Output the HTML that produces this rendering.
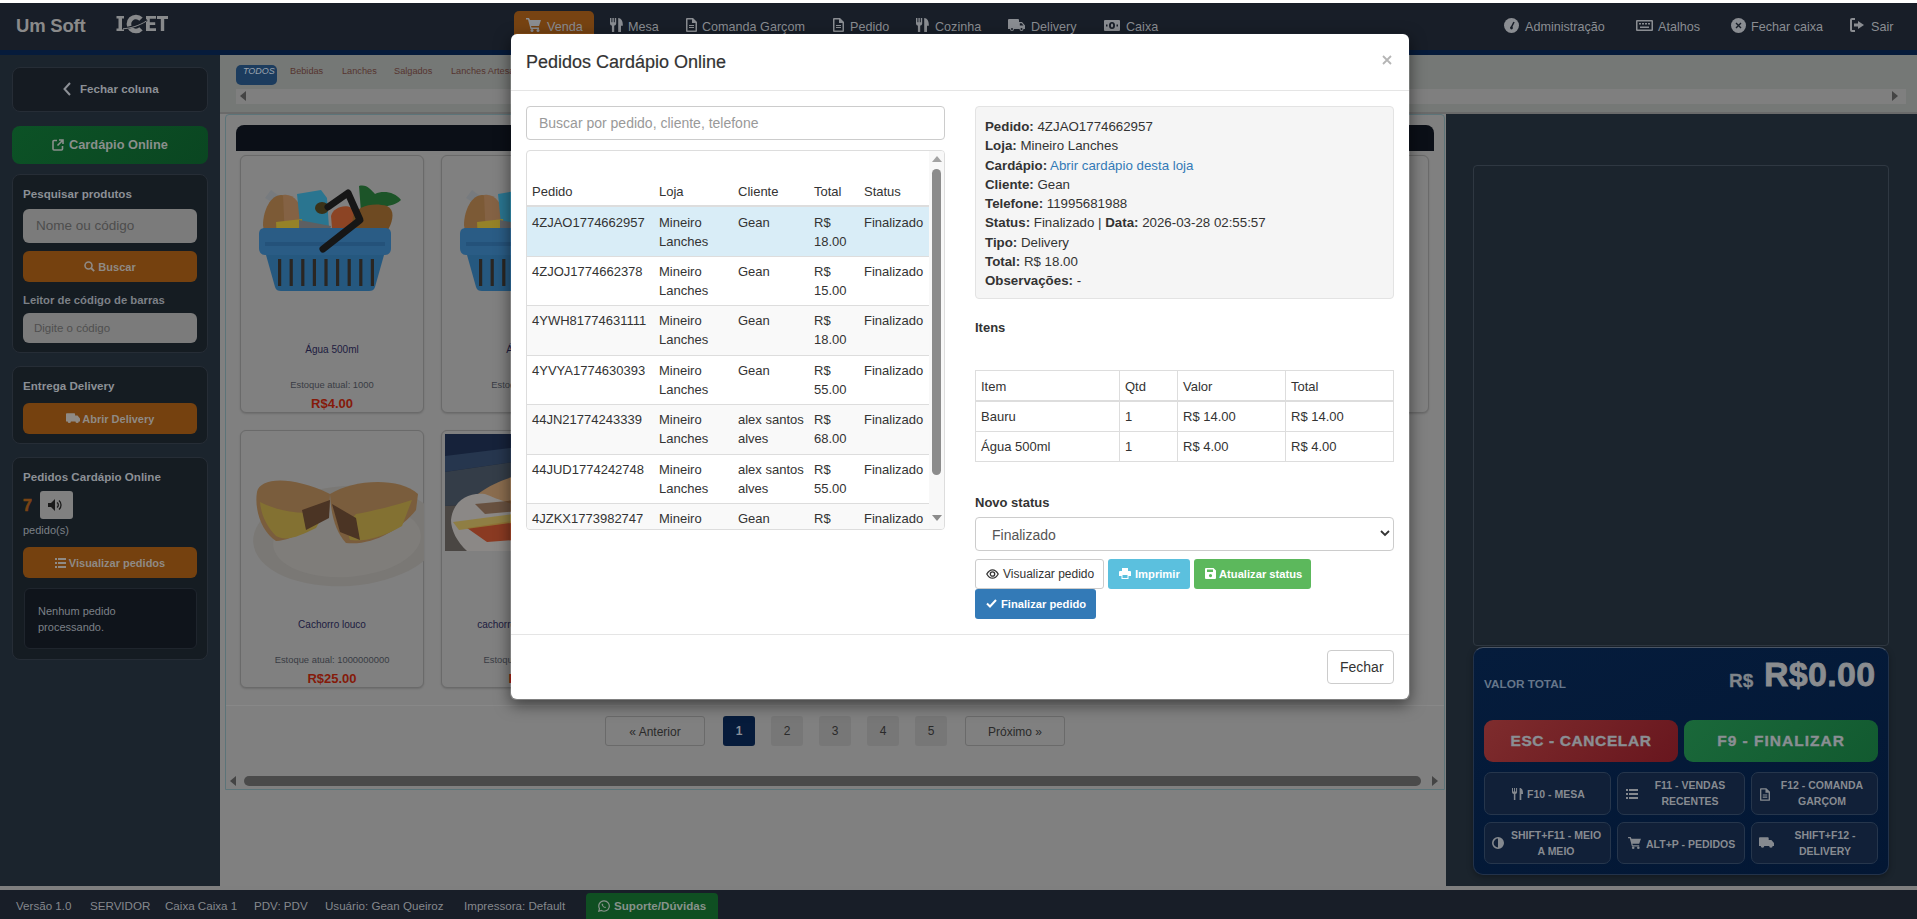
<!DOCTYPE html>
<html><head><meta charset="utf-8">
<style>
*{box-sizing:border-box}
html,body{margin:0;padding:0}
body{width:1917px;height:919px;overflow:hidden;position:relative;font-family:"Liberation Sans",sans-serif;background:#808080}
.a{position:absolute}
.nw{white-space:nowrap}
/* navbar */
#topw{left:0;top:0;width:1917px;height:3px;background:#fff}
#nav{left:0;top:3px;width:1917px;height:47px;background:#181e28}
#navb{left:0;top:50px;width:1917px;height:5px;background:#061b3b}
.ni{top:20px;font-size:12.6px;color:#8a8d92;white-space:nowrap;line-height:15px}
.nic{fill:#8a8d92}
/* sidebar */
#side{left:0;top:55px;width:220px;height:831px;background:#1b242d}
.scard{left:12px;width:196px;background:#151c22;border:1px solid #262d36;border-radius:8px}
.stitle{left:10px;font-size:11.6px;font-weight:bold;color:#8c9096;white-space:nowrap}
.obtn{background:#75410f;border-radius:6px;color:#8f8a85;font-weight:bold;font-size:11px;text-align:center;white-space:nowrap}
.sinp{background:#7b7b7b;border-radius:6px;color:#4a4a4a;white-space:nowrap}
/* main */
#tabs{left:220px;top:55px;width:1697px;height:57px;background:#757876}
#tabline{left:220px;top:112px;width:1697px;height:2px;background:#6a6a6a}
.tab{top:66px;font-size:9.2px;color:#56342f;white-space:nowrap}
#panel{left:225px;top:114px;width:1220px;height:676px;border:1px solid #5c7479;border-radius:4px 4px 0 0;border-bottom-width:1px}
.card{width:184px;height:258px;background:#808080;border:1px solid #6a6a6a;border-radius:6px;box-shadow:0 1px 2px rgba(0,0,0,.15)}
.pname{width:184px;text-align:center;font-size:10px;color:#1d1b3f;white-space:nowrap}
.pst{width:184px;text-align:center;font-size:9.4px;color:#393c44;white-space:nowrap}
.ppr{width:184px;text-align:center;font-size:13px;font-weight:bold;color:#851a0a;white-space:nowrap}
.pg{top:716px;height:30px;border-radius:3px;font-size:12px;color:#2a2a2a;text-align:center;line-height:30px}
/* right */
#rpanel{left:1446px;top:114px;width:471px;height:772px;background:#1b242d}
#gstrip{left:0;top:886px;width:1917px;height:4px;background:#7f7f7f}
#foot{left:0;top:890px;width:1917px;height:29px;background:#181e28}
.ft{top:899px;font-size:11.6px;color:#85888d;white-space:nowrap}
.fk{color:#8a8e93;font-weight:bold;text-align:center;white-space:nowrap}
.sk{background:#112038;border:1px solid #26364c;border-radius:7px}
.skt{font-size:10.5px;font-weight:bold;color:#878b91;line-height:15.5px;white-space:nowrap}
</style></head>
<body>
<div id="topw" class="a"></div>
<div id="nav" class="a"></div>
<div id="navb" class="a"></div>
<div class="a nw" style="left:16px;top:15px;font-size:18.5px;font-weight:bold;color:#8a8a8a;letter-spacing:-0.2px">Um Soft</div>
<svg class="a" style="left:116px;top:14px" width="54" height="20" viewBox="0 0 54 20"><path d="M0.5 2h7.5v2.6H6v9.8h2V17H0.5v-2.6h2V4.6h-2z" fill="#888a8c"/><path d="M25 5.2A7 7 0 1 0 25 14.8" fill="none" stroke="#888a8c" stroke-width="4.6"/><path d="M30 2h10v2.8h-6.2v3.4h5.4V11h-5.4v3.2H40V17H30z" fill="#888a8c"/><path d="M41 2h11v3h-3.8v12h-3.4V5H41z" fill="#888a8c"/><path d="M6 14.5C14 14 22 12 31 6" fill="none" stroke="#181e28" stroke-width="2.2"/><path d="M7 14.8C15 14.2 23 11.8 30.5 7" fill="none" stroke="#888a8c" stroke-width="1"/></svg>
<!-- nav items -->
<div class="a" style="left:514px;top:11px;width:80px;height:39px;background:#774312;border-radius:5px 5px 0 0"></div>
<svg class="a" style="left:526px;top:18px" width="15" height="14" viewBox="0 0 15 14"><path class="nic" d="M0 0h3l1 2h11l-2 6H5l.5 1.5H13V11H4.5L2 1.5H0z"/><circle class="nic" cx="6" cy="12.5" r="1.5"/><circle class="nic" cx="12" cy="12.5" r="1.5"/></svg>
<div class="a ni" style="left:547px">Venda</div>
<svg class="a" style="left:610px;top:18px" width="13" height="14" viewBox="0 0 13 14"><path class="nic" d="M0 0h1.4v4.2h1V0h1.4v4.2h1V0h1.4v5.4c0 1.2-.9 2-2 2.2V14H1.9V7.6C.8 7.4 0 6.6 0 5.4zM8.2 0c3 0 4.6 3 4.6 6.5v1.3h-1.8V14H8.2z"/></svg>
<div class="a ni" style="left:628px">Mesa</div>
<svg class="a" style="left:686px;top:18px" width="11" height="14" viewBox="0 0 11 14"><path class="nic" d="M0 1a1 1 0 011-1h6l4 4v9a1 1 0 01-1 1H1a1 1 0 01-1-1zM1.5 1.5v11h8V5H6V1.5zM3 7h5v1H3zm0 2h5v1H3z"/></svg>
<div class="a ni" style="left:702px">Comanda Garçom</div>
<svg class="a" style="left:833px;top:18px" width="11" height="14" viewBox="0 0 11 14"><path class="nic" d="M0 1a1 1 0 011-1h6l4 4v9a1 1 0 01-1 1H1a1 1 0 01-1-1zM1.5 1.5v11h8V5H6V1.5zM3 7h5v1H3zm0 2h5v1H3z"/></svg>
<div class="a ni" style="left:850px">Pedido</div>
<svg class="a" style="left:916px;top:18px" width="13" height="14" viewBox="0 0 13 14"><path class="nic" d="M0 0h1.4v4.2h1V0h1.4v4.2h1V0h1.4v5.4c0 1.2-.9 2-2 2.2V14H1.9V7.6C.8 7.4 0 6.6 0 5.4zM8.2 0c3 0 4.6 3 4.6 6.5v1.3h-1.8V14H8.2z"/></svg>
<div class="a ni" style="left:935px">Cozinha</div>
<svg class="a" style="left:1008px;top:19px" width="17" height="13" viewBox="0 0 17 13"><path class="nic" d="M0 1a1 1 0 011-1h9a1 1 0 011 1v2h3l3 3.5V10h-1.5a2 2 0 01-4 0H6a2 2 0 01-4 0H0z"/><circle cx="4" cy="10" r="1" fill="#181e28"/><circle cx="13.5" cy="10" r="1" fill="#181e28"/><path d="M11.8 4.2h1.8l1.9 2.3h-3.7z" fill="#181e28"/></svg>
<div class="a ni" style="left:1031px">Delivery</div>
<svg class="a" style="left:1104px;top:20px" width="16" height="11" viewBox="0 0 16 11"><rect class="nic" x="0" y="0" width="16" height="11" rx="1"/><ellipse cx="8" cy="5.5" rx="3" ry="3.6" fill="#181e28"/><ellipse cx="8" cy="5.5" rx="1.1" ry="2" fill="#8a8d92"/><rect x="2" y="4.5" width="1.5" height="2" fill="#181e28"/><rect x="12.5" y="4.5" width="1.5" height="2" fill="#181e28"/></svg>
<div class="a ni" style="left:1126px">Caixa</div>
<svg class="a" style="left:1504px;top:18px" width="15" height="15" viewBox="0 0 15 15"><circle class="nic" cx="7.5" cy="7.5" r="7.5"/><path d="M7 10l3-6" stroke="#181e28" stroke-width="1.6"/><circle cx="7.5" cy="10" r="1.4" fill="#181e28"/></svg>
<div class="a ni" style="left:1525px">Administração</div>
<svg class="a" style="left:1636px;top:20px" width="17" height="11" viewBox="0 0 17 11"><path class="nic" d="M0 1a1 1 0 011-1h15a1 1 0 011 1v9a1 1 0 01-1 1H1a1 1 0 01-1-1zM1.5 1.5v8h14v-8zM3 3h2v1.5H3zm3 0h2v1.5H6zm3 0h2v1.5H9zm3 0h2v1.5h-2zM4 6.5h9V8H4z"/></svg>
<div class="a ni" style="left:1658px">Atalhos</div>
<svg class="a" style="left:1731px;top:18px" width="15" height="15" viewBox="0 0 15 15"><circle class="nic" cx="7.5" cy="7.5" r="7.5"/><path d="M5 5l5 5M10 5l-5 5" stroke="#181e28" stroke-width="1.4"/></svg>
<div class="a ni" style="left:1751px">Fechar caixa</div>
<svg class="a" style="left:1850px;top:18px" width="15" height="14" viewBox="0 0 15 14"><path class="nic" d="M0 2a2 2 0 012-2h3v2H2v10h3v2H2a2 2 0 01-2-2zM8 3l6 4-6 4V8.5H4v-3h4z"/></svg>
<div class="a ni" style="left:1871px">Sair</div>

<!-- sidebar -->
<div id="side" class="a"></div>
<div class="a scard" style="top:67px;height:45px;background:#151b22"></div>
<svg class="a" style="left:63px;top:82px" width="8" height="14" viewBox="0 0 8 14"><path d="M7 1L1.5 7 7 13" fill="none" stroke="#8c9096" stroke-width="2"/></svg>
<div class="a nw" style="left:80px;top:82px;font-size:11.6px;font-weight:bold;color:#8c9096">Fechar coluna</div>
<div class="a" style="left:12px;top:126px;width:196px;height:38px;background:linear-gradient(135deg,#0c5226,#0a4621);border-radius:8px"></div>
<svg class="a" style="left:52px;top:139px" width="12" height="12" viewBox="0 0 12 12"><path d="M5 1.5H2a1 1 0 00-1 1v7.5a1 1 0 001 1h7.5a1 1 0 001-1V7" fill="none" stroke="#8a8f8c" stroke-width="1.6"/><path d="M7 1h4v4M11 1L5.5 6.5" fill="none" stroke="#8a8f8c" stroke-width="1.6"/></svg>
<div class="a nw" style="left:69px;top:137px;font-size:12.8px;font-weight:bold;color:#8a8f8c">Cardápio Online</div>

<div class="a scard" style="top:174px;height:179px"></div>
<div class="a stitle" style="left:23px;top:187px">Pesquisar produtos</div>
<div class="a sinp" style="left:23px;top:209px;width:174px;height:34px;font-size:13.5px;padding:9px 0 0 13px;color:#4d4d4d">Nome ou código</div>
<div class="a obtn" style="left:23px;top:251px;width:174px;height:31px;line-height:33px">
<svg width="11" height="11" viewBox="0 0 11 11" style="vertical-align:-1px"><circle cx="4.5" cy="4.5" r="3.5" fill="none" stroke="#8f8a85" stroke-width="1.6"/><path d="M7 7l3.2 3.2" stroke="#8f8a85" stroke-width="1.8"/></svg> Buscar</div>
<div class="a stitle" style="left:23px;top:294px;font-size:11.3px;color:#7c8087">Leitor de código de barras</div>
<div class="a sinp" style="left:23px;top:313px;width:174px;height:30px;font-size:11.5px;padding:9px 0 0 11px;color:#4f4f4f">Digite o código</div>

<div class="a scard" style="top:366px;height:78px"></div>
<div class="a stitle" style="left:23px;top:379px">Entrega Delivery</div>
<div class="a obtn" style="left:23px;top:403px;width:174px;height:31px;line-height:33px">
<svg width="14" height="11" viewBox="0 0 17 13" style="vertical-align:-1px"><path fill="#8f8a85" d="M0 1a1 1 0 011-1h9a1 1 0 011 1v2h3l3 3.5V10h-1.5a2 2 0 01-4 0H6a2 2 0 01-4 0H0z"/></svg> Abrir Delivery</div>

<div class="a scard" style="top:457px;height:203px"></div>
<div class="a stitle" style="left:23px;top:470px">Pedidos Cardápio Online</div>
<div class="a nw" style="left:23px;top:497px;font-size:16px;font-weight:bold;color:#7a4414;-webkit-text-stroke:0.6px #7a4414">7</div>
<div class="a" style="left:40px;top:491px;width:33px;height:28px;background:#808080;border-radius:3px"></div>
<svg class="a" style="left:48px;top:499px" width="16" height="12" viewBox="0 0 16 12"><path d="M0 4h3l4-4v12L3 8H0z" fill="#1a1a1a"/><path d="M9 3.5a3 3 0 010 5M11 1.5a6 6 0 010 9" fill="none" stroke="#1a1a1a" stroke-width="1.3"/></svg>
<div class="a nw" style="left:23px;top:524px;font-size:11px;color:#7c8087">pedido(s)</div>
<div class="a obtn" style="left:23px;top:547px;width:174px;height:31px;line-height:33px">
<svg width="11" height="10" viewBox="0 0 11 10" style="vertical-align:-1px"><path fill="#8f8a85" d="M0 0h2v2H0zm3 0h8v2H3zM0 4h2v2H0zm3 0h8v2H3zM0 8h2v2H0zm3 0h8v2H3z"/></svg> Visualizar pedidos</div>
<div class="a" style="left:24px;top:588px;width:173px;height:61px;background:#0f141b;border:1px solid #1f252d;border-radius:6px"></div>
<div class="a" style="left:38px;top:603px;font-size:11px;line-height:16px;color:#7c8087">Nenhum pedido<br>processando.</div>

<!-- main -->
<div id="tabs" class="a"></div>
<div class="a" style="left:236px;top:65px;width:41px;height:20px;background:#1c3c5e;border-radius:5px"></div>
<div class="a nw" style="left:243px;top:66px;font-size:9px;font-style:italic;color:#9aa3ad">TODOS</div>
<div class="a tab" style="left:290px">Bebidas</div>
<div class="a tab" style="left:342px">Lanches</div>
<div class="a tab" style="left:394px">Salgados</div>
<div class="a tab" style="left:451px">Lanches Artesanais</div>
<div class="a" style="left:236px;top:89px;width:1670px;height:15px;background:#7f7f7f"></div>
<svg class="a" style="left:240px;top:91px" width="6" height="10" viewBox="0 0 6 10"><path d="M6 0v10L0 5z" fill="#444"/></svg>
<svg class="a" style="left:1892px;top:91px" width="6" height="10" viewBox="0 0 6 10"><path d="M0 0v10l6-5z" fill="#444"/></svg>
<div id="tabline" class="a"></div>
<div id="panel" class="a"></div>
<div class="a" style="left:236px;top:125px;width:1198px;height:26px;background:#0b0f17;border-radius:8px 8px 0 0"></div>

<div id="cards"><div class="a card" style="left:240px;top:155px"></div>
<svg class="a" style="left:255px;top:180px" width="150" height="115" viewBox="0 0 150 115"><path d="M10 18l6-8 8 6-4 8z" fill="#777b7f"/><path d="M8 45c0-15 8-30 18-30 8 0 14 6 16 14l-2 30H10z" fill="#7c5a36"/><path d="M28 15c10-2 18 8 20 20l-5 25H30z" fill="#846244"/><path d="M42 14l24-4 6 8 2 30-28 6z" fill="#2a7590"/><path d="M60 28a7 6 0 1014 0 7 6 0 10-14 0z" fill="#3a3218"/><path d="M76 36c2-10 20-14 24-4l-2 28H78z" fill="#8c4424"/><path d="M104 6c8-2 12 4 16 8 8-4 20-2 26 6-6 6-16 6-24 8l-16 4z" fill="#1c5428"/><path d="M98 36c4-10 20-14 34-10 8 4 6 14 2 22l-10 16H96z" fill="#6e4a22"/><path d="M21 42l26-3 3 22H22z" fill="#958228"/><path d="M44 40l32 6-4 16-28-4z" fill="#5d5f62"/><path d="M4 54c0-4 2-6 6-6h120c4 0 6 2 6 6v14c0 4-2 7-6 7H10c-4 0-6-3-6-7z" fill="#2a5c85"/><path d="M10 62h120v4H10z" fill="#24527a"/><path d="M11 75h118l-9 32c-1 3-3 4-6 4H26c-3 0-5-1-6-4z" fill="#25587f"/><path d="M23.0 79h3.2v27h-3.2zM34.6 79h3.2v27h-3.2zM46.2 79h3.2v27h-3.2zM57.8 79h3.2v27h-3.2zM69.4 79h3.2v27h-3.2zM81.0 79h3.2v27h-3.2zM92.6 79h3.2v27h-3.2zM104.2 79h3.2v27h-3.2zM115.8 79h3.2v27h-3.2z" fill="#2a2622"/><path d="M73 27L93 13 105 40 68 69" fill="none" stroke="#161616" stroke-width="7" stroke-linejoin="round" stroke-linecap="round"/></svg>
<div class="a pname" style="left:240px;top:344px">Água 500ml</div>
<div class="a pst" style="left:240px;top:379px">Estoque atual: 1000</div>
<div class="a ppr" style="left:240px;top:396px">R$4.00</div>
<div class="a card" style="left:441px;top:155px"></div>
<svg class="a" style="left:456px;top:180px" width="150" height="115" viewBox="0 0 150 115"><path d="M10 18l6-8 8 6-4 8z" fill="#777b7f"/><path d="M8 45c0-15 8-30 18-30 8 0 14 6 16 14l-2 30H10z" fill="#7c5a36"/><path d="M28 15c10-2 18 8 20 20l-5 25H30z" fill="#846244"/><path d="M42 14l24-4 6 8 2 30-28 6z" fill="#2a7590"/><path d="M60 28a7 6 0 1014 0 7 6 0 10-14 0z" fill="#3a3218"/><path d="M76 36c2-10 20-14 24-4l-2 28H78z" fill="#8c4424"/><path d="M104 6c8-2 12 4 16 8 8-4 20-2 26 6-6 6-16 6-24 8l-16 4z" fill="#1c5428"/><path d="M98 36c4-10 20-14 34-10 8 4 6 14 2 22l-10 16H96z" fill="#6e4a22"/><path d="M21 42l26-3 3 22H22z" fill="#958228"/><path d="M44 40l32 6-4 16-28-4z" fill="#5d5f62"/><path d="M4 54c0-4 2-6 6-6h120c4 0 6 2 6 6v14c0 4-2 7-6 7H10c-4 0-6-3-6-7z" fill="#2a5c85"/><path d="M10 62h120v4H10z" fill="#24527a"/><path d="M11 75h118l-9 32c-1 3-3 4-6 4H26c-3 0-5-1-6-4z" fill="#25587f"/><path d="M23.0 79h3.2v27h-3.2zM34.6 79h3.2v27h-3.2zM46.2 79h3.2v27h-3.2zM57.8 79h3.2v27h-3.2zM69.4 79h3.2v27h-3.2zM81.0 79h3.2v27h-3.2zM92.6 79h3.2v27h-3.2zM104.2 79h3.2v27h-3.2zM115.8 79h3.2v27h-3.2z" fill="#2a2622"/><path d="M73 27L93 13 105 40 68 69" fill="none" stroke="#161616" stroke-width="7" stroke-linejoin="round" stroke-linecap="round"/></svg>
<div class="a pname" style="left:441px;top:344px">Água 500ml</div>
<div class="a pst" style="left:441px;top:379px">Estoque atual: 1000</div>
<div class="a ppr" style="left:441px;top:396px">R$4.00</div>
<div class="a card" style="left:642px;top:155px"></div>
<svg class="a" style="left:657px;top:180px" width="150" height="115" viewBox="0 0 150 115"><path d="M10 18l6-8 8 6-4 8z" fill="#777b7f"/><path d="M8 45c0-15 8-30 18-30 8 0 14 6 16 14l-2 30H10z" fill="#7c5a36"/><path d="M28 15c10-2 18 8 20 20l-5 25H30z" fill="#846244"/><path d="M42 14l24-4 6 8 2 30-28 6z" fill="#2a7590"/><path d="M60 28a7 6 0 1014 0 7 6 0 10-14 0z" fill="#3a3218"/><path d="M76 36c2-10 20-14 24-4l-2 28H78z" fill="#8c4424"/><path d="M104 6c8-2 12 4 16 8 8-4 20-2 26 6-6 6-16 6-24 8l-16 4z" fill="#1c5428"/><path d="M98 36c4-10 20-14 34-10 8 4 6 14 2 22l-10 16H96z" fill="#6e4a22"/><path d="M21 42l26-3 3 22H22z" fill="#958228"/><path d="M44 40l32 6-4 16-28-4z" fill="#5d5f62"/><path d="M4 54c0-4 2-6 6-6h120c4 0 6 2 6 6v14c0 4-2 7-6 7H10c-4 0-6-3-6-7z" fill="#2a5c85"/><path d="M10 62h120v4H10z" fill="#24527a"/><path d="M11 75h118l-9 32c-1 3-3 4-6 4H26c-3 0-5-1-6-4z" fill="#25587f"/><path d="M23.0 79h3.2v27h-3.2zM34.6 79h3.2v27h-3.2zM46.2 79h3.2v27h-3.2zM57.8 79h3.2v27h-3.2zM69.4 79h3.2v27h-3.2zM81.0 79h3.2v27h-3.2zM92.6 79h3.2v27h-3.2zM104.2 79h3.2v27h-3.2zM115.8 79h3.2v27h-3.2z" fill="#2a2622"/><path d="M73 27L93 13 105 40 68 69" fill="none" stroke="#161616" stroke-width="7" stroke-linejoin="round" stroke-linecap="round"/></svg>
<div class="a pname" style="left:642px;top:344px">Refrigerante</div>
<div class="a pst" style="left:642px;top:379px">Estoque atual: 1000</div>
<div class="a ppr" style="left:642px;top:396px">R$6.00</div>
<div class="a card" style="left:843px;top:155px"></div>
<svg class="a" style="left:858px;top:180px" width="150" height="115" viewBox="0 0 150 115"><path d="M10 18l6-8 8 6-4 8z" fill="#777b7f"/><path d="M8 45c0-15 8-30 18-30 8 0 14 6 16 14l-2 30H10z" fill="#7c5a36"/><path d="M28 15c10-2 18 8 20 20l-5 25H30z" fill="#846244"/><path d="M42 14l24-4 6 8 2 30-28 6z" fill="#2a7590"/><path d="M60 28a7 6 0 1014 0 7 6 0 10-14 0z" fill="#3a3218"/><path d="M76 36c2-10 20-14 24-4l-2 28H78z" fill="#8c4424"/><path d="M104 6c8-2 12 4 16 8 8-4 20-2 26 6-6 6-16 6-24 8l-16 4z" fill="#1c5428"/><path d="M98 36c4-10 20-14 34-10 8 4 6 14 2 22l-10 16H96z" fill="#6e4a22"/><path d="M21 42l26-3 3 22H22z" fill="#958228"/><path d="M44 40l32 6-4 16-28-4z" fill="#5d5f62"/><path d="M4 54c0-4 2-6 6-6h120c4 0 6 2 6 6v14c0 4-2 7-6 7H10c-4 0-6-3-6-7z" fill="#2a5c85"/><path d="M10 62h120v4H10z" fill="#24527a"/><path d="M11 75h118l-9 32c-1 3-3 4-6 4H26c-3 0-5-1-6-4z" fill="#25587f"/><path d="M23.0 79h3.2v27h-3.2zM34.6 79h3.2v27h-3.2zM46.2 79h3.2v27h-3.2zM57.8 79h3.2v27h-3.2zM69.4 79h3.2v27h-3.2zM81.0 79h3.2v27h-3.2zM92.6 79h3.2v27h-3.2zM104.2 79h3.2v27h-3.2zM115.8 79h3.2v27h-3.2z" fill="#2a2622"/><path d="M73 27L93 13 105 40 68 69" fill="none" stroke="#161616" stroke-width="7" stroke-linejoin="round" stroke-linecap="round"/></svg>
<div class="a pname" style="left:843px;top:344px">Suco</div>
<div class="a pst" style="left:843px;top:379px">Estoque atual: 1000</div>
<div class="a ppr" style="left:843px;top:396px">R$5.00</div>
<div class="a card" style="left:1044px;top:155px"></div>
<svg class="a" style="left:1059px;top:180px" width="150" height="115" viewBox="0 0 150 115"><path d="M10 18l6-8 8 6-4 8z" fill="#777b7f"/><path d="M8 45c0-15 8-30 18-30 8 0 14 6 16 14l-2 30H10z" fill="#7c5a36"/><path d="M28 15c10-2 18 8 20 20l-5 25H30z" fill="#846244"/><path d="M42 14l24-4 6 8 2 30-28 6z" fill="#2a7590"/><path d="M60 28a7 6 0 1014 0 7 6 0 10-14 0z" fill="#3a3218"/><path d="M76 36c2-10 20-14 24-4l-2 28H78z" fill="#8c4424"/><path d="M104 6c8-2 12 4 16 8 8-4 20-2 26 6-6 6-16 6-24 8l-16 4z" fill="#1c5428"/><path d="M98 36c4-10 20-14 34-10 8 4 6 14 2 22l-10 16H96z" fill="#6e4a22"/><path d="M21 42l26-3 3 22H22z" fill="#958228"/><path d="M44 40l32 6-4 16-28-4z" fill="#5d5f62"/><path d="M4 54c0-4 2-6 6-6h120c4 0 6 2 6 6v14c0 4-2 7-6 7H10c-4 0-6-3-6-7z" fill="#2a5c85"/><path d="M10 62h120v4H10z" fill="#24527a"/><path d="M11 75h118l-9 32c-1 3-3 4-6 4H26c-3 0-5-1-6-4z" fill="#25587f"/><path d="M23.0 79h3.2v27h-3.2zM34.6 79h3.2v27h-3.2zM46.2 79h3.2v27h-3.2zM57.8 79h3.2v27h-3.2zM69.4 79h3.2v27h-3.2zM81.0 79h3.2v27h-3.2zM92.6 79h3.2v27h-3.2zM104.2 79h3.2v27h-3.2zM115.8 79h3.2v27h-3.2z" fill="#2a2622"/><path d="M73 27L93 13 105 40 68 69" fill="none" stroke="#161616" stroke-width="7" stroke-linejoin="round" stroke-linecap="round"/></svg>
<div class="a pname" style="left:1044px;top:344px">Coxinha</div>
<div class="a pst" style="left:1044px;top:379px">Estoque atual: 1000</div>
<div class="a ppr" style="left:1044px;top:396px">R$7.00</div>
<div class="a card" style="left:1245px;top:155px"></div>
<svg class="a" style="left:1260px;top:180px" width="150" height="115" viewBox="0 0 150 115"><path d="M10 18l6-8 8 6-4 8z" fill="#777b7f"/><path d="M8 45c0-15 8-30 18-30 8 0 14 6 16 14l-2 30H10z" fill="#7c5a36"/><path d="M28 15c10-2 18 8 20 20l-5 25H30z" fill="#846244"/><path d="M42 14l24-4 6 8 2 30-28 6z" fill="#2a7590"/><path d="M60 28a7 6 0 1014 0 7 6 0 10-14 0z" fill="#3a3218"/><path d="M76 36c2-10 20-14 24-4l-2 28H78z" fill="#8c4424"/><path d="M104 6c8-2 12 4 16 8 8-4 20-2 26 6-6 6-16 6-24 8l-16 4z" fill="#1c5428"/><path d="M98 36c4-10 20-14 34-10 8 4 6 14 2 22l-10 16H96z" fill="#6e4a22"/><path d="M21 42l26-3 3 22H22z" fill="#958228"/><path d="M44 40l32 6-4 16-28-4z" fill="#5d5f62"/><path d="M4 54c0-4 2-6 6-6h120c4 0 6 2 6 6v14c0 4-2 7-6 7H10c-4 0-6-3-6-7z" fill="#2a5c85"/><path d="M10 62h120v4H10z" fill="#24527a"/><path d="M11 75h118l-9 32c-1 3-3 4-6 4H26c-3 0-5-1-6-4z" fill="#25587f"/><path d="M23.0 79h3.2v27h-3.2zM34.6 79h3.2v27h-3.2zM46.2 79h3.2v27h-3.2zM57.8 79h3.2v27h-3.2zM69.4 79h3.2v27h-3.2zM81.0 79h3.2v27h-3.2zM92.6 79h3.2v27h-3.2zM104.2 79h3.2v27h-3.2zM115.8 79h3.2v27h-3.2z" fill="#2a2622"/><path d="M73 27L93 13 105 40 68 69" fill="none" stroke="#161616" stroke-width="7" stroke-linejoin="round" stroke-linecap="round"/></svg>
<div class="a pname" style="left:1245px;top:344px">Pastel</div>
<div class="a pst" style="left:1245px;top:379px">Estoque atual: 1000</div>
<div class="a ppr" style="left:1245px;top:396px">R$8.00</div>
<div class="a card" style="left:240px;top:430px"></div>
<svg class="a" style="left:250px;top:470px" width="174" height="130" viewBox="0 0 174 130"><ellipse cx="97" cy="66" rx="94" ry="50" fill="#7a7875" transform="rotate(-4 97 66)"/><ellipse cx="97" cy="70" rx="74" ry="37" fill="#7f7d7a" transform="rotate(-4 97 70)"/><path d="M7 22C10 8 40 5 80 24L79 44C62 56 45 70 26 71 12 62 4 40 7 22z" fill="#7a5d3d"/><path d="M10 32C30 42 55 46 76 40L66 58C50 66 36 72 26 66 16 56 11 44 10 32z" fill="#837132"/><path d="M52 40L80 30 79 48 56 60z" fill="#4b3424"/><path d="M80 24C102 10 148 6 168 24L166 40C150 60 122 76 96 73 86 62 81 46 80 24z" fill="#7a5d3d"/><path d="M106 44C128 40 150 34 162 30L152 56C132 68 112 72 100 70 96 62 100 50 106 44z" fill="#837132"/><path d="M82 34L106 48 110 70 90 62z" fill="#4b3424"/></svg>
<div class="a pname" style="left:240px;top:619px">Cachorro louco</div>
<div class="a pst" style="left:240px;top:654px">Estoque atual: 1000000000</div>
<div class="a ppr" style="left:240px;top:671px">R$25.00</div>
<div class="a card" style="left:441px;top:430px"></div>
<svg class="a" style="left:445px;top:434px" width="177" height="117" viewBox="0 0 177 117"><rect width="177" height="117" fill="#16223a"/><path d="M0 22L177 0v12L0 38z" fill="#26364e"/><path d="M0 38L177 12v50L0 72z" fill="#343d48"/><path d="M0 72L177 62v55H0z" fill="#4a4643"/><path d="M18 80C24 58 62 38 112 35h65v50H18z" fill="#8a6c4e"/><path d="M6 86C8 66 24 58 40 60 60 68 90 82 177 86v31H22C12 108 6 96 6 86z" fill="#8b8886"/><path d="M22 94L177 70v28L42 108z" fill="#8a3a22"/><path d="M8 88L177 66v8L14 96z" fill="#8f7c38" opacity=".85"/><path d="M30 70L177 56v12L40 80z" fill="#5a3a22" opacity=".7"/></svg>
<div class="a pname" style="left:441px;top:619px">cachorro quente especial</div>
<div class="a pst" style="left:441px;top:654px">Estoque atual: 1000000</div>
<div class="a ppr" style="left:441px;top:671px">R$15.00</div>
<div class="a card" style="left:642px;top:430px"></div>
<svg class="a" style="left:652px;top:470px" width="174" height="130" viewBox="0 0 174 130"><ellipse cx="97" cy="66" rx="94" ry="50" fill="#7a7875" transform="rotate(-4 97 66)"/><ellipse cx="97" cy="70" rx="74" ry="37" fill="#7f7d7a" transform="rotate(-4 97 70)"/><path d="M7 22C10 8 40 5 80 24L79 44C62 56 45 70 26 71 12 62 4 40 7 22z" fill="#7a5d3d"/><path d="M10 32C30 42 55 46 76 40L66 58C50 66 36 72 26 66 16 56 11 44 10 32z" fill="#837132"/><path d="M52 40L80 30 79 48 56 60z" fill="#4b3424"/><path d="M80 24C102 10 148 6 168 24L166 40C150 60 122 76 96 73 86 62 81 46 80 24z" fill="#7a5d3d"/><path d="M106 44C128 40 150 34 162 30L152 56C132 68 112 72 100 70 96 62 100 50 106 44z" fill="#837132"/><path d="M82 34L106 48 110 70 90 62z" fill="#4b3424"/></svg>
<div class="a pname" style="left:642px;top:619px">X-Burger</div>
<div class="a pst" style="left:642px;top:654px">Estoque atual: 1000</div>
<div class="a ppr" style="left:642px;top:671px">R$18.00</div>
<div class="a card" style="left:843px;top:430px"></div>
<svg class="a" style="left:853px;top:470px" width="174" height="130" viewBox="0 0 174 130"><ellipse cx="97" cy="66" rx="94" ry="50" fill="#7a7875" transform="rotate(-4 97 66)"/><ellipse cx="97" cy="70" rx="74" ry="37" fill="#7f7d7a" transform="rotate(-4 97 70)"/><path d="M7 22C10 8 40 5 80 24L79 44C62 56 45 70 26 71 12 62 4 40 7 22z" fill="#7a5d3d"/><path d="M10 32C30 42 55 46 76 40L66 58C50 66 36 72 26 66 16 56 11 44 10 32z" fill="#837132"/><path d="M52 40L80 30 79 48 56 60z" fill="#4b3424"/><path d="M80 24C102 10 148 6 168 24L166 40C150 60 122 76 96 73 86 62 81 46 80 24z" fill="#7a5d3d"/><path d="M106 44C128 40 150 34 162 30L152 56C132 68 112 72 100 70 96 62 100 50 106 44z" fill="#837132"/><path d="M82 34L106 48 110 70 90 62z" fill="#4b3424"/></svg>
<div class="a pname" style="left:843px;top:619px">X-Salada</div>
<div class="a pst" style="left:843px;top:654px">Estoque atual: 1000</div>
<div class="a ppr" style="left:843px;top:671px">R$20.00</div>
<div class="a card" style="left:1044px;top:430px"></div>
<svg class="a" style="left:1048px;top:434px" width="177" height="117" viewBox="0 0 177 117"><rect width="177" height="117" fill="#16223a"/><path d="M0 22L177 0v12L0 38z" fill="#26364e"/><path d="M0 38L177 12v50L0 72z" fill="#343d48"/><path d="M0 72L177 62v55H0z" fill="#4a4643"/><path d="M18 80C24 58 62 38 112 35h65v50H18z" fill="#8a6c4e"/><path d="M6 86C8 66 24 58 40 60 60 68 90 82 177 86v31H22C12 108 6 96 6 86z" fill="#8b8886"/><path d="M22 94L177 70v28L42 108z" fill="#8a3a22"/><path d="M8 88L177 66v8L14 96z" fill="#8f7c38" opacity=".85"/><path d="M30 70L177 56v12L40 80z" fill="#5a3a22" opacity=".7"/></svg>
<div class="a pname" style="left:1044px;top:619px">Bauru</div>
<div class="a pst" style="left:1044px;top:654px">Estoque atual: 1000</div>
<div class="a ppr" style="left:1044px;top:671px">R$14.00</div></div><!--/cards-->

<div class="a" style="left:226px;top:705px;width:1218px;height:1px;background:#888"></div>
<div class="a pg" style="left:605px;width:100px;border:1px solid #6a6a6a">« Anterior</div>
<div class="a pg" style="left:723px;width:32px;background:#061b3b;color:#8a8f98;font-weight:bold;line-height:31px">1</div>
<div class="a pg" style="left:771px;width:32px;background:#777">2</div>
<div class="a pg" style="left:819px;width:32px;background:#777">3</div>
<div class="a pg" style="left:867px;width:32px;background:#777">4</div>
<div class="a pg" style="left:915px;width:32px;background:#777">5</div>
<div class="a pg" style="left:965px;width:100px;border:1px solid #6a6a6a">Próximo »</div>
<svg class="a" style="left:230px;top:776px" width="6" height="10" viewBox="0 0 6 10"><path d="M6 0v10L0 5z" fill="#444"/></svg>
<div class="a" style="left:244px;top:776px;width:1177px;height:10px;background:#4a4a4a;border-radius:5px"></div>
<svg class="a" style="left:1432px;top:776px" width="6" height="10" viewBox="0 0 6 10"><path d="M0 0v10l6-5z" fill="#444"/></svg>

<!-- right panel -->
<div id="rpanel" class="a"></div>
<div class="a" style="left:1473px;top:165px;width:416px;height:481px;border:1px solid #2f3842;border-radius:4px"></div>
<div class="a" style="left:1473px;top:647px;width:416px;height:228px;background:linear-gradient(160deg,#051c3c,#031734);border:1px solid #22324a;border-top-color:#4a5565;border-radius:10px;box-shadow:0 2px 6px rgba(0,0,0,.3)"></div>
<div class="a nw" style="left:1484px;top:677px;font-size:11.8px;font-weight:bold;color:#66768a">VALOR TOTAL</div>
<div class="a nw" style="left:1729px;top:670px;font-size:19px;font-weight:bold;color:#7f8489;-webkit-text-stroke:0.3px #7f8489">R$</div>
<div class="a nw" style="left:1764px;top:655px;font-size:34px;font-weight:bold;color:#8a8c8f;letter-spacing:0.3px;-webkit-text-stroke:0.8px #8a8c8f">R$0.00</div>
<div class="a fk" style="left:1484px;top:720px;width:194px;height:42px;line-height:42px;background:linear-gradient(135deg,#7e2c2d,#68161e);border-radius:9px;font-size:15.5px;letter-spacing:0.6px;-webkit-text-stroke:0.4px #8a8e93">ESC - CANCELAR</div>
<div class="a fk" style="left:1684px;top:720px;width:194px;height:42px;line-height:42px;background:linear-gradient(135deg,#1a683a,#125a30);border-radius:9px;font-size:15.5px;letter-spacing:1px;-webkit-text-stroke:0.4px #8a8e93">F9 - FINALIZAR</div>
<div class="a sk" style="left:1484px;top:772px;width:127px;height:43px"></div>
<div class="a sk" style="left:1617px;top:772px;width:128px;height:43px"></div>
<div class="a sk" style="left:1751px;top:772px;width:127px;height:43px"></div>
<div class="a sk" style="left:1484px;top:822px;width:127px;height:42px"></div>
<div class="a sk" style="left:1617px;top:822px;width:128px;height:42px"></div>
<div class="a sk" style="left:1751px;top:822px;width:127px;height:42px"></div>
<svg class="a" style="left:1512px;top:788px" width="11" height="12" viewBox="0 0 13 14"><path fill="#85898f" d="M0 0h1.2v4h1.2V0h1.2v4h1.2V0H6v5c0 1-1 2-2 2v7H2.2V7C1 7 0 6 0 5zM9 0c3 0 4 3 4 6v1h-2v7H9z"/></svg>
<div class="a skt" style="left:1527px;top:787px">F10 - MESA</div>
<svg class="a" style="left:1626px;top:789px" width="12" height="10" viewBox="0 0 12 10"><path fill="#85898f" d="M0 0h2v2H0zm3 0h9v2H3zM0 4h2v2H0zm3 0h9v2H3zM0 8h2v2H0zm3 0h9v2H3z"/></svg>
<div class="a skt" style="left:1650px;top:778px;width:80px;text-align:center">F11 - VENDAS<br>RECENTES</div>
<svg class="a" style="left:1760px;top:788px" width="10" height="13" viewBox="0 0 11 14"><path fill="#85898f" d="M0 1a1 1 0 011-1h6l4 4v9a1 1 0 01-1 1H1a1 1 0 01-1-1zM1.5 1.5v11h8V5H6V1.5zM3 7h5v1.2H3zm0 2.3h5v1.2H3z"/></svg>
<div class="a skt" style="left:1776px;top:778px;width:92px;text-align:center">F12 - COMANDA<br>GARÇOM</div>
<svg class="a" style="left:1492px;top:837px" width="12" height="12" viewBox="0 0 12 12"><circle cx="6" cy="6" r="5.2" fill="none" stroke="#85898f" stroke-width="1.6"/><path d="M6 0.8a5.2 5.2 0 010 10.4z" fill="#85898f"/></svg>
<div class="a skt" style="left:1508px;top:828px;width:96px;text-align:center">SHIFT+F11 - MEIO<br>A MEIO</div>
<svg class="a" style="left:1628px;top:837px" width="13" height="12" viewBox="0 0 15 14"><path fill="#85898f" d="M0 0h3l1 2h11l-2 6H5l.5 1.5H13V11H4.5L2 1.5H0z"/><circle fill="#85898f" cx="6" cy="12.5" r="1.5"/><circle fill="#85898f" cx="12" cy="12.5" r="1.5"/></svg>
<div class="a skt" style="left:1646px;top:837px">ALT+P - PEDIDOS</div>
<svg class="a" style="left:1759px;top:837px" width="15" height="12" viewBox="0 0 17 13"><path fill="#85898f" d="M0 1a1 1 0 011-1h9a1 1 0 011 1v2h3l3 3.5V10h-1.5a2 2 0 01-4 0H6a2 2 0 01-4 0H0z"/></svg>
<div class="a skt" style="left:1787px;top:828px;width:76px;text-align:center">SHIFT+F12 -<br>DELIVERY</div>
<div id="gstrip" class="a"></div>
<div id="foot" class="a"></div>
<div class="a ft" style="left:16px">Versão 1.0</div>
<div class="a ft" style="left:90px">SERVIDOR</div>
<div class="a ft" style="left:165px">Caixa Caixa 1</div>
<div class="a ft" style="left:254px">PDV: PDV</div>
<div class="a ft" style="left:325px">Usuário: Gean Queiroz</div>
<div class="a ft" style="left:464px">Impressora: Default</div>
<div class="a" style="left:586px;top:893px;width:132px;height:26px;background:#0f4f22;border-radius:4px 4px 0 0"></div>
<svg class="a" style="left:598px;top:900px" width="12" height="12" viewBox="0 0 12 12"><path d="M6 .8a5.2 5.2 0 00-4.5 7.8L.8 11.2l2.7-.7A5.2 5.2 0 106 .8z" fill="none" stroke="#87928b" stroke-width="1.2"/><path d="M4 3.5c-.5.5-.5 1.5.5 2.8s2.3 1.9 2.9 1.6l.6-.7-1-.6-.5.4c-.6-.2-1.2-.8-1.5-1.4l.4-.5-.5-1z" fill="#87928b"/></svg><div class="a nw" style="left:614px;top:899px;font-size:11.6px;font-weight:bold;color:#87928b">Suporte/Dúvidas</div>

<!-- MODAL -->
<div class="a" style="left:510px;top:33px;width:900px;height:667px;border-radius:6px;box-shadow:0 5px 15px rgba(0,0,0,.5)"></div>
<div id="modal" class="a" style="left:511px;top:34px;width:898px;height:665px;background:#fff;border-radius:6px;color:#333;font-size:13px">
<div class="a nw" style="left:15px;top:18px;font-size:18px;line-height:20px;color:#333;-webkit-text-stroke:0.2px #333">Pedidos Cardápio Online</div>
<svg class="a" style="left:871px;top:21px" width="10" height="10" viewBox="0 0 10 10"><path d="M1 1l8 8M9 1L1 9" stroke="#b5b5b5" stroke-width="1.8"/></svg>
<div class="a" style="left:0;top:56px;width:898px;height:1px;background:#e5e5e5"></div>
<!-- search -->
<div class="a" style="left:15px;top:72px;width:419px;height:34px;border:1px solid #ccc;border-radius:4px"></div>
<div class="a nw" style="left:28px;top:81px;font-size:14px;line-height:16px;color:#999">Buscar por pedido, cliente, telefone</div>
<!-- orders table -->
<div class="a" style="left:15px;top:116px;width:419px;height:380px;border:1px solid #ddd;border-radius:4px;overflow:hidden">
 <div class="a nw" style="left:5px;top:31px;font-size:13px;line-height:19px">Pedido</div><div class="a nw" style="left:132px;top:31px;font-size:13px;line-height:19px">Loja</div><div class="a nw" style="left:211px;top:31px;font-size:13px;line-height:19px">Cliente</div><div class="a nw" style="left:287px;top:31px;font-size:13px;line-height:19px">Total</div><div class="a nw" style="left:337px;top:31px;font-size:13px;line-height:19px">Status</div>
<div class="a" style="left:0;top:54px;width:402px;height:2px;background:#ddd"></div>
<div class="a" style="left:0;top:56px;width:402px;height:49px;background:#d9edf7"></div>
<div class="a nw" style="left:5px;top:62px;font-size:13px;line-height:19px">4ZJAO1774662957</div><div class="a nw" style="left:132px;top:62px;font-size:13px;line-height:19px">Mineiro<br>Lanches</div><div class="a nw" style="left:211px;top:62px;font-size:13px;line-height:19px">Gean</div><div class="a nw" style="left:287px;top:62px;font-size:13px;line-height:19px">R$<br>18.00</div><div class="a nw" style="left:337px;top:62px;font-size:13px;line-height:19px">Finalizado</div>
<div class="a" style="left:0;top:105px;width:402px;height:1px;background:#ddd"></div>
<div class="a" style="left:0;top:106px;width:402px;height:48px;background:#fff"></div>
<div class="a nw" style="left:5px;top:111px;font-size:13px;line-height:19px">4ZJOJ1774662378</div><div class="a nw" style="left:132px;top:111px;font-size:13px;line-height:19px">Mineiro<br>Lanches</div><div class="a nw" style="left:211px;top:111px;font-size:13px;line-height:19px">Gean</div><div class="a nw" style="left:287px;top:111px;font-size:13px;line-height:19px">R$<br>15.00</div><div class="a nw" style="left:337px;top:111px;font-size:13px;line-height:19px">Finalizado</div>
<div class="a" style="left:0;top:154px;width:402px;height:1px;background:#ddd"></div>
<div class="a" style="left:0;top:155px;width:402px;height:49px;background:#f9f9f9"></div>
<div class="a nw" style="left:5px;top:160px;font-size:13px;line-height:19px">4YWH81774631111</div><div class="a nw" style="left:132px;top:160px;font-size:13px;line-height:19px">Mineiro<br>Lanches</div><div class="a nw" style="left:211px;top:160px;font-size:13px;line-height:19px">Gean</div><div class="a nw" style="left:287px;top:160px;font-size:13px;line-height:19px">R$<br>18.00</div><div class="a nw" style="left:337px;top:160px;font-size:13px;line-height:19px">Finalizado</div>
<div class="a" style="left:0;top:204px;width:402px;height:1px;background:#ddd"></div>
<div class="a" style="left:0;top:205px;width:402px;height:48px;background:#fff"></div>
<div class="a nw" style="left:5px;top:210px;font-size:13px;line-height:19px">4YVYA1774630393</div><div class="a nw" style="left:132px;top:210px;font-size:13px;line-height:19px">Mineiro<br>Lanches</div><div class="a nw" style="left:211px;top:210px;font-size:13px;line-height:19px">Gean</div><div class="a nw" style="left:287px;top:210px;font-size:13px;line-height:19px">R$<br>55.00</div><div class="a nw" style="left:337px;top:210px;font-size:13px;line-height:19px">Finalizado</div>
<div class="a" style="left:0;top:253px;width:402px;height:1px;background:#ddd"></div>
<div class="a" style="left:0;top:254px;width:402px;height:49px;background:#f9f9f9"></div>
<div class="a nw" style="left:5px;top:259px;font-size:13px;line-height:19px">44JN21774243339</div><div class="a nw" style="left:132px;top:259px;font-size:13px;line-height:19px">Mineiro<br>Lanches</div><div class="a nw" style="left:211px;top:259px;font-size:13px;line-height:19px">alex santos<br>alves</div><div class="a nw" style="left:287px;top:259px;font-size:13px;line-height:19px">R$<br>68.00</div><div class="a nw" style="left:337px;top:259px;font-size:13px;line-height:19px">Finalizado</div>
<div class="a" style="left:0;top:303px;width:402px;height:1px;background:#ddd"></div>
<div class="a" style="left:0;top:304px;width:402px;height:48px;background:#fff"></div>
<div class="a nw" style="left:5px;top:309px;font-size:13px;line-height:19px">44JUD1774242748</div><div class="a nw" style="left:132px;top:309px;font-size:13px;line-height:19px">Mineiro<br>Lanches</div><div class="a nw" style="left:211px;top:309px;font-size:13px;line-height:19px">alex santos<br>alves</div><div class="a nw" style="left:287px;top:309px;font-size:13px;line-height:19px">R$<br>55.00</div><div class="a nw" style="left:337px;top:309px;font-size:13px;line-height:19px">Finalizado</div>
<div class="a" style="left:0;top:352px;width:402px;height:1px;background:#ddd"></div>
<div class="a" style="left:0;top:353px;width:402px;height:56px;background:#f9f9f9"></div>
<div class="a nw" style="left:5px;top:358px;font-size:13px;line-height:19px">4JZKX1773982747</div><div class="a nw" style="left:132px;top:358px;font-size:13px;line-height:19px">Mineiro<br>Lanches</div><div class="a nw" style="left:211px;top:358px;font-size:13px;line-height:19px">Gean</div><div class="a nw" style="left:287px;top:358px;font-size:13px;line-height:19px">R$<br>25.00</div><div class="a nw" style="left:337px;top:358px;font-size:13px;line-height:19px">Finalizado</div>
 <div class="a" style="left:402px;top:0;width:15px;height:378px;background:#f8f8f8"></div>
 <svg class="a" style="left:405px;top:5px" width="10" height="6" viewBox="0 0 10 6"><path d="M5 0l5 6H0z" fill="#a3a3a3"/></svg>
 <div class="a" style="left:405px;top:18px;width:9px;height:306px;background:#8c8c8c;border-radius:4.5px"></div>
 <svg class="a" style="left:405px;top:364px" width="10" height="6" viewBox="0 0 10 6"><path d="M0 0h10L5 6z" fill="#8c8c8c"/></svg>
</div>
<!-- details well -->
<div class="a" style="left:464px;top:72px;width:419px;height:193px;background:#f5f5f5;border:1px solid #e3e3e3;border-radius:4px"></div>
<div class="a nw" style="left:474px;top:83px;font-size:13.3px;line-height:19.25px;color:#333">
<b>Pedido:</b> 4ZJAO1774662957<br>
<b>Loja:</b> Mineiro Lanches<br>
<b>Cardápio:</b> <span style="color:#337ab7">Abrir cardápio desta loja</span><br>
<b>Cliente:</b> Gean<br>
<b>Telefone:</b> 11995681988<br>
<b>Status:</b> Finalizado | <b>Data:</b> 2026-03-28 02:55:57<br>
<b>Tipo:</b> Delivery<br>
<b>Total:</b> R$ 18.00<br>
<b>Observações:</b> -
</div>
<div class="a nw" style="left:464px;top:286px;font-size:13px;font-weight:bold;color:#333">Itens</div>
<!-- items table -->
<div class="a" style="left:464px;top:336px;width:419px;height:92px;border:1px solid #ddd"></div>
<div class="a" style="left:465px;top:366px;width:417px;height:2px;background:#ddd"></div>
<div class="a" style="left:465px;top:397px;width:417px;height:1px;background:#ddd"></div>
<div class="a" style="left:608px;top:337px;width:1px;height:90px;background:#ddd"></div>
<div class="a" style="left:666px;top:337px;width:1px;height:90px;background:#ddd"></div>
<div class="a" style="left:774px;top:337px;width:1px;height:90px;background:#ddd"></div>
<div class="a nw" style="left:470px;top:345px;font-size:13px;line-height:16px">Item</div>
<div class="a nw" style="left:614px;top:345px;font-size:13px;line-height:16px">Qtd</div>
<div class="a nw" style="left:672px;top:345px;font-size:13px;line-height:16px">Valor</div>
<div class="a nw" style="left:780px;top:345px;font-size:13px;line-height:16px">Total</div>
<div class="a nw" style="left:470px;top:375px;font-size:13px;line-height:16px">Bauru</div>
<div class="a nw" style="left:614px;top:375px;font-size:13px;line-height:16px">1</div>
<div class="a nw" style="left:672px;top:375px;font-size:13px;line-height:16px">R$ 14.00</div>
<div class="a nw" style="left:780px;top:375px;font-size:13px;line-height:16px">R$ 14.00</div>
<div class="a nw" style="left:470px;top:405px;font-size:13px;line-height:16px">Água 500ml</div>
<div class="a nw" style="left:614px;top:405px;font-size:13px;line-height:16px">1</div>
<div class="a nw" style="left:672px;top:405px;font-size:13px;line-height:16px">R$ 4.00</div>
<div class="a nw" style="left:780px;top:405px;font-size:13px;line-height:16px">R$ 4.00</div>
<!-- novo status -->
<div class="a nw" style="left:464px;top:461px;font-size:13px;font-weight:bold;color:#333">Novo status</div>
<div class="a" style="left:464px;top:483px;width:419px;height:34px;border:1px solid #ccc;border-radius:4px"></div>
<div class="a nw" style="left:481px;top:493px;font-size:14px;line-height:16px;color:#555">Finalizado</div>
<svg class="a" style="left:869px;top:496px" width="10" height="7" viewBox="0 0 10 7"><path d="M1 1l4 4 4-4" fill="none" stroke="#333" stroke-width="1.8"/></svg>
<!-- buttons -->
<div class="a" style="left:464px;top:525px;width:129px;height:30px;border:1px solid #ccc;border-radius:3px;background:#fff"></div>
<svg class="a" style="left:475px;top:535px" width="13" height="10" viewBox="0 0 13 10"><path d="M.8 5C2.5 2 4.5.8 6.5.8S10.5 2 12.2 5C10.5 8 8.5 9.2 6.5 9.2S2.5 8 .8 5z" fill="none" stroke="#333" stroke-width="1.3"/><circle cx="6.5" cy="5" r="2.2" fill="none" stroke="#333" stroke-width="1.3"/></svg>
<div class="a nw" style="left:492px;top:533px;font-size:12px;line-height:14px;color:#333">Visualizar pedido</div>
<div class="a" style="left:597px;top:525px;width:82px;height:30px;background:#5bc0de;border-radius:3px"></div>
<svg class="a" style="left:608px;top:534px" width="12" height="11" viewBox="0 0 12 11"><path d="M3 0h6v3H3zM0 4a1 1 0 011-1h10a1 1 0 011 1v4H9.5v3h-7V8H0zM3.5 7v3h5V7z" fill="#fff"/></svg>
<div class="a nw" style="left:624px;top:533px;font-size:11.2px;line-height:14px;font-weight:bold;color:#fff">Imprimir</div>
<div class="a" style="left:683px;top:525px;width:117px;height:30px;background:#5cb85c;border-radius:3px"></div>
<svg class="a" style="left:694px;top:534px" width="11" height="11" viewBox="0 0 11 11"><path d="M1 0h7.5L11 2.5V10a1 1 0 01-1 1H1a1 1 0 01-1-1V1a1 1 0 011-1zm1 1.5v2.5h6V1.5zM5.5 6a1.6 1.6 0 100 3.2 1.6 1.6 0 000-3.2z" fill="#fff" fill-rule="evenodd"/></svg>
<div class="a nw" style="left:708px;top:533px;font-size:11.2px;line-height:14px;font-weight:bold;color:#fff">Atualizar status</div>
<div class="a" style="left:464px;top:555px;width:121px;height:30px;background:#337ab7;border-radius:3px"></div>
<svg class="a" style="left:475px;top:565px" width="11" height="9" viewBox="0 0 11 9"><path d="M1 4.5l3 3L10 1" fill="none" stroke="#fff" stroke-width="2"/></svg>
<div class="a nw" style="left:490px;top:563px;font-size:11.2px;line-height:14px;font-weight:bold;color:#fff">Finalizar pedido</div>
<!-- footer -->
<div class="a" style="left:0;top:600px;width:898px;height:1px;background:#e5e5e5"></div>
<div class="a" style="left:816px;top:616px;width:67px;height:34px;border:1px solid #ccc;border-radius:4px;background:#fff"></div>
<div class="a nw" style="left:829px;top:625px;font-size:14px;line-height:16px;color:#333">Fechar</div>
</div>

</body></html>
